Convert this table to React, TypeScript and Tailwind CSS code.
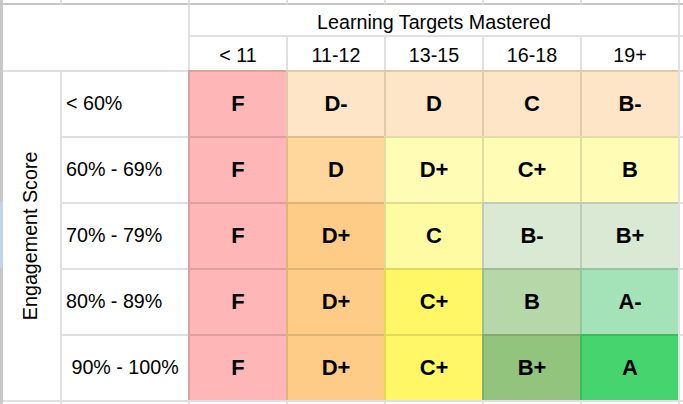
import React from "react";

type Cell = { g: string; bg: string };

const F: Cell = { g: "F", bg: "bg-[#ffb6b6]" };

const rows: { label: string; cells: Cell[]; strip: string }[] = [
  {
    label: "< 60%",
    strip: "bg-[#c8c8c8]",
    cells: [
      F,
      { g: "D-", bg: "bg-[#ffe5c7]" },
      { g: "D", bg: "bg-[#ffe5c7]" },
      { g: "C", bg: "bg-[#ffe5c7]" },
      { g: "B-", bg: "bg-[#ffe5c7]" },
    ],
  },
  {
    label: "60% - 69%",
    strip: "bg-[#c8c8c8]",
    cells: [
      F,
      { g: "D", bg: "bg-[#ffd69b]" },
      { g: "D+", bg: "bg-[#fffcb6]" },
      { g: "C+", bg: "bg-[#fffcb6]" },
      { g: "B", bg: "bg-[#fffcb6]" },
    ],
  },
  {
    label: "70% - 79%",
    strip: "bg-[#c3d3ee]",
    cells: [
      F,
      { g: "D+", bg: "bg-[#ffcc88]" },
      { g: "C", bg: "bg-[#fffba3]" },
      { g: "B-", bg: "bg-[#d9e9d3]" },
      { g: "B+", bg: "bg-[#d9e9d3]" },
    ],
  },
  {
    label: "80% - 89%",
    strip: "bg-[#c8c8c8]",
    cells: [
      F,
      { g: "D+", bg: "bg-[#ffcc88]" },
      { g: "C+", bg: "bg-[#fff766]" },
      { g: "B", bg: "bg-[#b6d7a8]" },
      { g: "A-", bg: "bg-[#a4e2b7]" },
    ],
  },
  {
    label: " 90% - 100%",
    strip: "bg-[#c8c8c8]",
    cells: [
      F,
      { g: "D+", bg: "bg-[#ffcc88]" },
      { g: "C+", bg: "bg-[#fff766]" },
      { g: "B+", bg: "bg-[#93c47d]" },
      { g: "A", bg: "bg-[#46d46e]" },
    ],
  },
];

const headers = ["< 11", "11-12", "13-15", "16-18", "19+"];

const line = "border-black/[0.12]";

export default function App() {
  return (
    <div className="w-[683px] h-[404px] overflow-hidden bg-white text-black font-['Liberation_Sans',Arial,sans-serif] text-[19.7px] leading-none">
      <div className="grid grid-cols-[3px_57px_128px_repeat(5,98px)_5px] grid-rows-[5px_30px_35px_repeat(5,66px)_4px]">
        {/* merged areas placed explicitly */}
        <div className="col-start-2 col-span-2 row-start-2 row-span-2 bg-white" />
        <div
          className={`col-start-2 row-start-4 row-span-5 border-t-2 ${line} flex items-center justify-center overflow-visible`}
        >
          <span className="-rotate-90 whitespace-nowrap inline-block">Engagement Score</span>
        </div>

        {/* top strip (column header edge) */}
        <div className="bg-[#c8c8c8]" />
        <div className="border-b-2 border-[#c6c6c6]" />
        <div className="border-b-2 border-l-2 border-b-[#c6c6c6] border-l-[#e0e0e0]" />
        <div className="border-b-2 border-l-2 border-b-[#c6c6c6] border-l-[#e0e0e0]" />
        <div className="border-b-2 border-l-2 border-b-[#c6c6c6] border-l-[#e0e0e0]" />
        <div className="border-b-2 border-l-2 border-b-[#c6c6c6] border-l-[#e0e0e0]" />
        <div className="border-b-2 border-l-2 border-b-[#c6c6c6] border-l-[#e0e0e0]" />
        <div className="border-b-2 border-l-2 border-b-[#c6c6c6] border-l-[#e0e0e0]" />
        <div className="border-b-2 border-l-2 border-b-[#c6c6c6] border-l-[#e0e0e0]" />

        {/* header row 1 */}
        <div className="bg-[#c8c8c8]" />
        <div className={`col-span-5 border-l-2 ${line} flex items-end justify-center pb-[2px]`}>
          Learning Targets Mastered
        </div>
        <div className={`border-l-2 ${line}`} />

        {/* header row 2 */}
        <div className="bg-[#c8c8c8]" />
        {headers.map((h) => (
          <div
            key={h}
            className={`border-l-2 border-t-2 ${line} flex items-end justify-center pb-[4px]`}
          >
            {h}
          </div>
        ))}
        <div className={`border-l-2 border-t-2 ${line}`} />

        {/* data rows */}
        {rows.map((r) => (
          <React.Fragment key={r.label}>
            <div className={r.strip} />
            <div className={`border-l-2 border-t-2 ${line} flex items-center pl-[4px] whitespace-pre`}>
              {r.label}
            </div>
            {r.cells.map((c, i) => (
              <div
                key={i}
                className={`border-l-2 border-t-2 ${line} ${c.bg} flex items-center justify-center font-bold text-[22px]`}
              >
                {c.g}
              </div>
            ))}
            <div className={`border-l-2 border-t-2 ${line}`} />
          </React.Fragment>
        ))}

        {/* bottom partial row */}
        <div className="bg-[#c8c8c8]" />
        <div className={`border-t-2 ${line}`} />
        <div className={`border-l-2 border-t-2 ${line}`} />
        <div className={`border-l-2 border-t-2 ${line}`} />
        <div className={`border-l-2 border-t-2 ${line}`} />
        <div className={`border-l-2 border-t-2 ${line}`} />
        <div className={`border-l-2 border-t-2 ${line}`} />
        <div className={`border-l-2 border-t-2 ${line}`} />
        <div className={`border-l-2 border-t-2 ${line}`} />
      </div>
    </div>
  );
}
